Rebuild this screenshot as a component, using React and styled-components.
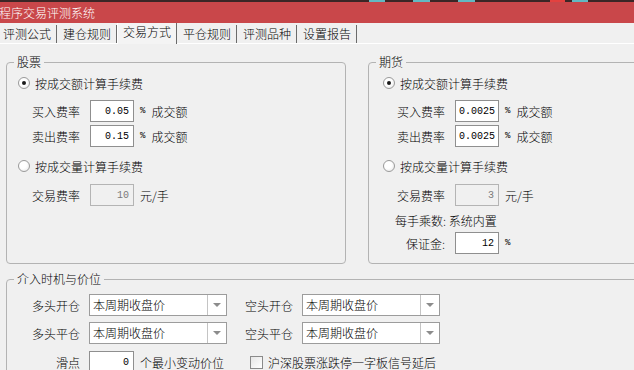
import styled, { createGlobalStyle } from "styled-components";

const GlobalStyle = createGlobalStyle`
  html, body {
    margin: 0;
    padding: 0;
    background: #f0f0f0;
  }
  body {
    font-family: "Noto Sans CJK SC", "Noto Sans", sans-serif;
    font-size: 12px;
    font-weight: 300;
    color: #000;
  }
`;

const Window = styled.div`
  width: 634px;
  height: 370px;
  overflow: hidden;
  background: #f0f0f0;
  display: flex;
  flex-direction: column;
`;

const TopStrip = styled.div`
  flex: none;
  height: 2px;
  background: linear-gradient(
    to right,
    #3b2626 0 369px,
    #62b9c2 369px 385px,
    #3b2626 385px 413px,
    #62b9c2 413px 430px,
    #3b2626 430px 458px,
    #62b9c2 458px 475px,
    #3b2626 475px 550px,
    #e3413f 550px 565px,
    #3b2626 565px 572px,
    #62b9c2 572px 588px,
    #3b2626 588px
  );
`;

const TitleBar = styled.div`
  flex: none;
  height: 21px;
  background: #c9474a;
  display: flex;
  align-items: center;
`;

const Title = styled.span`
  margin-left: -1px;
  color: #fff;
  font-size: 12px;
  line-height: 21px;
`;

const TabBar = styled.div`
  flex: none;
  height: 21px;
  display: flex;
  align-items: flex-end;
  margin-left: -3px;
  border-bottom: 1px solid #fff;
  box-sizing: border-box;
`;

const Tab = styled.div`
  height: ${(p) => (p.$active ? "21px" : "18px")};
  padding: 0 5px ${(p) => (p.$active ? "3px" : "0")};
  margin-bottom: ${(p) => (p.$active ? "-1px" : "0")};
  display: flex;
  align-items: center;
  box-sizing: border-box;
  line-height: 16px;
  border-left: 1px solid ${(p) => (p.$active ? "#fff" : "transparent")};
  border-right: 1px solid #6b6b6b;
  background: ${(p) => (p.$active ? "#f4f4f4" : "transparent")};
`;

const UpperRow = styled.div`
  display: flex;
  gap: 22px;
  padding-left: 6px;
  margin-top: 10px;
`;

const Group = styled.fieldset`
  margin: 0;
  padding: 0;
  min-width: 0;
  width: ${(p) => p.$w}px;
  height: ${(p) => p.$h}px;
  box-sizing: border-box;
  border: 1px solid #b3b3b3;
  border-radius: 4px;
  flex: none;
`;

const Legend = styled.legend`
  margin-left: 7px;
  padding: 0 3px;
  line-height: 16px;
`;

const GroupBody = styled.div`
  padding: 5px 0 0 ${(p) => p.$pad}px;
  display: flex;
  flex-direction: column;
`;

const RadioRow = styled.label`
  display: flex;
  align-items: center;
  gap: 5px;
  height: 16px;
  margin-top: ${(p) => p.$mt || 0}px;
`;

const Radio = styled.span`
  width: 12px;
  height: 12px;
  border-radius: 50%;
  box-sizing: border-box;
  border: 1px solid #9a9a9a;
  background: radial-gradient(circle at 40% 40%, #ffffff 0 40%, #e2e2e2 100%);
  display: flex;
  align-items: center;
  justify-content: center;

  &::after {
    content: "";
    width: 4px;
    height: 4px;
    border-radius: 50%;
    background: ${(p) => (p.$checked ? "#1a1a1a" : "transparent")};
  }
`;

const FieldRow = styled.div`
  display: flex;
  align-items: center;
  height: 22px;
  margin-top: ${(p) => p.$mt || 0}px;
  padding-left: 14px;
`;

const FieldLabel = styled.span`
  width: ${(p) => p.$w || 48}px;
  margin-right: ${(p) => p.$gap || 10}px;
  text-align: ${(p) => p.$align || "left"};
  white-space: nowrap;
  flex: none;
`;

const NumBox = styled.div`
  width: ${(p) => p.$w || 44}px;
  height: 22px;
  box-sizing: border-box;
  border: 1px solid ${(p) => (p.$disabled ? "#b4b4b4" : "#8f8f8f")};
  background: ${(p) => (p.$disabled ? "#f0f0f0" : "#fff")};
  color: ${(p) => (p.$disabled ? "#7a7a7a" : "#000")};
  font-family: "Liberation Mono", monospace;
  font-size: 10px;
  font-weight: 400;
  display: flex;
  align-items: center;
  justify-content: ${(p) => (p.$left ? "flex-start" : "flex-end")};
  padding: 0 4px 0 3px;
  flex: none;
`;

const Unit = styled.span`
  margin-left: 6px;
  white-space: nowrap;
  display: flex;
  align-items: center;
  gap: 6px;
`;

const Pct = styled.span`
  font-family: "Liberation Mono", monospace;
  font-size: 9px;
  font-weight: 400;
`;

const InfoLine = styled.div`
  height: 16px;
  line-height: 16px;
  margin-top: 7px;
  padding-left: 12px;
`;

const LowerGroup = styled(Group)`
  margin: 7px 0 0 6px;
`;

const LowerBody = styled.div`
  padding: 7px 0 0 13px;
  display: flex;
  flex-direction: column;
`;

const LowerRow = styled.div`
  display: flex;
  align-items: center;
  height: 22px;
  margin-top: ${(p) => p.$mt || 0}px;
`;

const Select = styled.div`
  width: 138px;
  height: 22px;
  box-sizing: border-box;
  border: 1px solid #9c9c9c;
  background: #fff;
  display: flex;
  flex: none;
`;

const SelectText = styled.span`
  flex: 1;
  padding-left: 3px;
  line-height: 20px;
`;

const SelectButton = styled.span`
  width: 18px;
  border-left: 1px solid #c4c4c4;
  display: flex;
  align-items: center;
  justify-content: center;

  &::after {
    content: "";
    border-left: 4px solid transparent;
    border-right: 4px solid transparent;
    border-top: 4px solid #8c8c8c;
  }
`;

const Spacer = styled.span`
  width: ${(p) => p.$w}px;
  flex: none;
`;

const CheckBox = styled.span`
  width: 13px;
  height: 13px;
  box-sizing: border-box;
  border: 1px solid #8a8a8a;
  background: linear-gradient(135deg, #e6e6e6, #ffffff);
  margin-right: 5px;
  flex: none;
`;

const tabs = ["评测公式", "建仓规则", "交易方式", "平仓规则", "评测品种", "设置报告"];

const FeeGroup = ({ title, width, pad, buy, sell, per, futures }) => (
  <Group $w={width} $h={210}>
    <Legend>{title}</Legend>
    <GroupBody $pad={pad}>
      <RadioRow>
        <Radio $checked />
        按成交额计算手续费
      </RadioRow>
      <FieldRow $mt={9}>
        <FieldLabel>买入费率</FieldLabel>
        <NumBox $left={futures}>{buy}</NumBox>
        <Unit>
          <Pct>%</Pct>成交额
        </Unit>
      </FieldRow>
      <FieldRow $mt={3}>
        <FieldLabel>卖出费率</FieldLabel>
        <NumBox $left={futures}>{sell}</NumBox>
        <Unit>
          <Pct>%</Pct>成交额
        </Unit>
      </FieldRow>
      <RadioRow $mt={11}>
        <Radio />
        按成交量计算手续费
      </RadioRow>
      <FieldRow $mt={10}>
        <FieldLabel>交易费率</FieldLabel>
        <NumBox $disabled>{per}</NumBox>
        <Unit>元/手</Unit>
      </FieldRow>
      {futures && (
        <>
          <InfoLine>每手乘数: 系统内置</InfoLine>
          <FieldRow $mt={3}>
            <FieldLabel $align="right">保证金:</FieldLabel>
            <NumBox>12</NumBox>
            <Unit>
              <Pct>%</Pct>
            </Unit>
          </FieldRow>
        </>
      )}
    </GroupBody>
  </Group>
);

const PriceSelect = () => (
  <Select>
    <SelectText>本周期收盘价</SelectText>
    <SelectButton />
  </Select>
);

export default function App() {
  return (
    <Window>
      <GlobalStyle />
      <TopStrip />
      <TitleBar>
        <Title>程序交易评测系统</Title>
      </TitleBar>
      <TabBar>
        {tabs.map((t) => (
          <Tab key={t} $active={t === "交易方式"}>
            {t}
          </Tab>
        ))}
      </TabBar>
      <UpperRow>
        <FeeGroup title="股票" width={340} pad={11} buy="0.05" sell="0.15" per="10" />
        <FeeGroup
          title="期货"
          width={300}
          pad={14}
          buy="0.0025"
          sell="0.0025"
          per="3"
          futures
        />
      </UpperRow>
      <LowerGroup $w={660} $h={120}>
        <Legend>介入时机与价位</Legend>
        <LowerBody>
          <LowerRow>
            <FieldLabel $w={60} $gap={9} $align="right">多头开仓</FieldLabel>
            <PriceSelect />
            <Spacer $w={18} />
            <FieldLabel $w={48} $gap={9}>空头开仓</FieldLabel>
            <PriceSelect />
          </LowerRow>
          <LowerRow $mt={6}>
            <FieldLabel $w={60} $gap={9} $align="right">多头平仓</FieldLabel>
            <PriceSelect />
            <Spacer $w={18} />
            <FieldLabel $w={48} $gap={9}>空头平仓</FieldLabel>
            <PriceSelect />
          </LowerRow>
          <LowerRow $mt={7}>
            <FieldLabel $w={60} $gap={9} $align="right">滑点</FieldLabel>
            <NumBox $w={45}>0</NumBox>
            <Unit>个最小变动价位</Unit>
            <Spacer $w={26} />
            <CheckBox />
            沪深股票涨跌停一字板信号延后
          </LowerRow>
        </LowerBody>
      </LowerGroup>
    </Window>
  );
}
